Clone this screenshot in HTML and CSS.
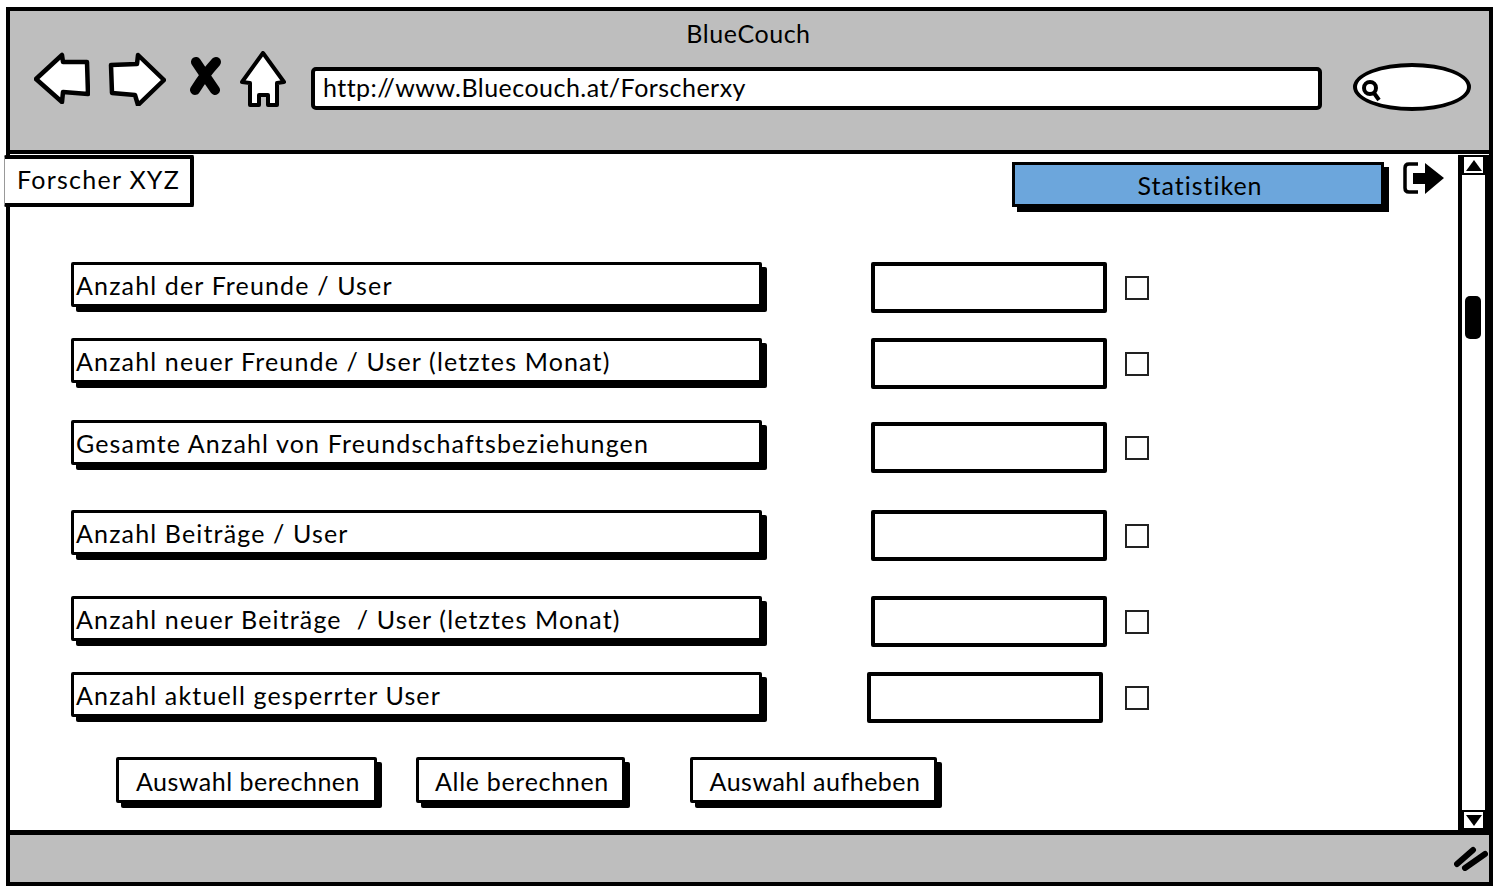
FILE: index.html
```html
<!DOCTYPE html>
<html lang="en">

<head>
    <meta charset="UTF-8">
    <meta name="viewport" content="width=device-width, initial-scale=1.0">
    <title>BlueCouch</title>
    <link rel="stylesheet" href="styles.css">
</head>

<body>
    <div class="window">
        <div class="head">
            <div class="head-tit">BlueCouch</div>
            <div class="tools">
                <svg class="ico-back" width="56" height="52" viewBox="0 0 56 52">
                    <path d="M2 27 L28 3 L29 10 L53 10 L54 42 L29 40 L28 50 Z" fill="#fff" stroke="#000" stroke-width="4.5" stroke-linejoin="round" />
                </svg>
                <svg class="ico-next" width="58" height="54" viewBox="0 0 58 54">
                    <path d="M3 13 L29 12 L30 3 L56 28 L30 53 L27 43 L4 41 Z" fill="#fff" stroke="#000" stroke-width="4.5" stroke-linejoin="round" />
                </svg>
                <svg class="ico-stop" width="34" height="40" viewBox="0 0 34 40">
                    <path d="M7 6 Q15 18 26 34 M27 6 Q16 18 6 34" fill="none" stroke="#000" stroke-width="10" stroke-linecap="round" />
                </svg>
                <svg class="ico-home" width="46" height="56" viewBox="0 0 46 56">
                    <path d="M23 2 L44 31 L37 32 L37 54 L28 54 L28 44 L19 44 L19 54 L10 54 L10 32 L2 31 Z" fill="#fff" stroke="#000" stroke-width="4" stroke-linejoin="round" />
                </svg>
                <div class="url">http://www.Bluecouch.at/Forscherxy</div>
                <div class="search">
                    <svg width="24" height="26" viewBox="0 0 24 26">
                        <circle cx="8" cy="11" r="6" fill="none" stroke="#000" stroke-width="4" />
                        <path d="M12 16 L17 23" stroke="#000" stroke-width="4" />
                    </svg>
                </div>
            </div>
        </div>

        <div class="main">
            <div class="tab">Forscher XYZ</div>
            <div class="content">
                <div class="topbar">
                    <a class="stat" href="#">Statistiken</a>
                    <svg class="ico-exit" width="42" height="34" viewBox="0 0 42 34">
                        <path d="M15 3 H6 Q2 3 2 7 V27 Q2 31 6 31 H15" fill="none" stroke="#000" stroke-width="3.5" />
                        <path d="M10 12 H22 V2 L41 17 L22 33 V23 H10 Z" fill="#000" />
                    </svg>
                </div>
                <div class="rows">
                    <div class="row">
                        <div class="label">Anzahl der Freunde / User</div>
                        <div class="field"></div>
                        <div class="check"></div>
                    </div>
                    <div class="row">
                        <div class="label">Anzahl neuer Freunde / User (letztes Monat)</div>
                        <div class="field"></div>
                        <div class="check"></div>
                    </div>
                    <div class="row">
                        <div class="label">Gesamte Anzahl von Freundschaftsbeziehungen</div>
                        <div class="field"></div>
                        <div class="check"></div>
                    </div>
                    <div class="row">
                        <div class="label">Anzahl Beiträge / User</div>
                        <div class="field"></div>
                        <div class="check"></div>
                    </div>
                    <div class="row">
                        <div class="label">Anzahl neuer Beiträge &nbsp;/ User (letztes Monat)</div>
                        <div class="field"></div>
                        <div class="check"></div>
                    </div>
                    <div class="row">
                        <div class="label">Anzahl aktuell gesperrter User</div>
                        <div class="field"></div>
                        <div class="check"></div>
                    </div>
                </div>
                <div class="btns">
                    <a class="btn btn-sel" href="#">Auswahl berechnen</a>
                    <a class="btn btn-all" href="#">Alle berechnen</a>
                    <a class="btn btn-off" href="#">Auswahl aufheben</a>
                </div>
            </div>
            <div class="scroll">
                <div class="scroll-btn"><span class="arrow-up"></span></div>
                <div class="thumb"></div>
                <div class="scroll-btn"><span class="arrow-down"></span></div>
            </div>
        </div>

        <div class="foot">
            <svg width="34" height="26" viewBox="0 0 34 26">
                <path d="M3 19 L19 5 M11 23 L31 9" stroke="#000" stroke-width="6" stroke-linecap="round" />
            </svg>
        </div>
    </div>
</body>

</html>
```

FILE: styles.css
```css
* {
    margin: 0;
    padding: 0;
    box-sizing: border-box;
}

body {
    background-color: white;
    font-family: "Lato", "Open Sans", sans-serif;
    font-size: 25px;
    letter-spacing: 1.15px;
    color: #000;
}

a {
    color: #000;
    text-decoration: none;
}

.window {
    width: 1487px;
    height: 879px;
    margin: 7px 0 0 6px;
    border: 4px solid #000;
    display: flex;
    flex-direction: column;
}

/* browser bar */
.head {
    height: 143px;
    background-color: #bebebe;
    border-bottom: 4px solid #000;
}

.head-tit {
    height: 34px;
    padding: 8px 2px 0 0;
    text-align: center;
    line-height: 28px;
    letter-spacing: 0.55px;
}

.tools {
    display: flex;
    align-items: flex-start;
    margin-top: 7px;
    padding-left: 24px;
}

.ico-next {
    margin-left: 18px;
}

.ico-stop {
    margin: 4px 0 0 23px;
}

.ico-home {
    margin: -1px 0 0 17px;
}

.url {
    width: 1011px;
    height: 43px;
    margin: 15px 0 0 25px;
    padding-left: 8px;
    line-height: 32px;
    letter-spacing: 0.47px;
    background-color: white;
    border: 4px solid #000;
    border-radius: 5px;
}

.search {
    width: 118px;
    height: 48px;
    margin: 11px 0 0 31px;
    padding: 10px 0 0 5px;
    background-color: white;
    border: 4px solid #000;
    border-radius: 50%;
}

.search svg {
    display: block;
}

/* page */
.main {
    flex: 1;
    display: flex;
    position: relative;
}

.tab {
    position: absolute;
    left: -6px;
    top: 1px;
    width: 190px;
    height: 52px;
    padding-left: 12px;
    line-height: 40px;
    letter-spacing: 1.25px;
    background-color: white;
    border: 4px solid #000;
    border-left: 1px solid #999;
    border-radius: 2px;
}

.content {
    flex: 1;
}

.topbar {
    display: flex;
    justify-content: flex-end;
    align-items: flex-start;
    height: 108px;
    padding: 8px 13px 0 0;
}

.stat {
    width: 372px;
    height: 45px;
    margin-right: 19px;
    padding-left: 4px;
    text-align: center;
    line-height: 40px;
    letter-spacing: 1px;
    background-color: #6ca6dc;
    border: 3px solid #000;
    box-shadow: 5px 5px 0 #000;
}

.ico-exit {
    margin-top: -1px;
}

.rows {
    padding-left: 61px;
}

.row {
    display: flex;
    align-items: flex-start;
    height: 50px;
}

.row:nth-child(2),
.row:nth-child(6) {
    margin-top: 26px;
}

.row:nth-child(3) {
    margin-top: 32px;
}

.row:nth-child(4) {
    margin-top: 40px;
}

.row:nth-child(5) {
    margin-top: 36px;
}

.label {
    width: 691px;
    height: 45px;
    padding-left: 2px;
    line-height: 41px;
    white-space: nowrap;
    background-color: white;
    border: 3px solid #000;
    border-radius: 2px;
    box-shadow: 5px 5px 0 #000;
}

.field {
    width: 236px;
    height: 51px;
    margin-left: 109px;
    background-color: white;
    border: 4px solid #000;
    border-radius: 2px;
}

.check {
    width: 24px;
    height: 24px;
    margin: 14px 0 0 18px;
    border: 2px solid #222;
}

.row:nth-child(3) .field {
    margin-top: 2px;
}

.row:nth-child(3) .check {
    margin-top: 16px;
}

.row:last-child .field {
    margin-left: 105px;
}

.row:last-child .check {
    margin-left: 22px;
}

.btns {
    display: flex;
    margin-top: 35px;
    padding-left: 106px;
}

.btn {
    height: 46px;
    padding-left: 3px;
    text-align: center;
    line-height: 43px;
    letter-spacing: 0.5px;
    background-color: white;
    border: 3px solid #000;
    border-radius: 2px;
    box-shadow: 5px 5px 0 #000;
}

.btn-sel {
    width: 261px;
}

.btn-all {
    width: 209px;
    margin-left: 39px;
    letter-spacing: 0.7px;
}

.btn-off {
    width: 247px;
    margin-left: 65px;
}

/* scrollbar */
.scroll {
    width: 31px;
    display: flex;
    flex-direction: column;
    justify-content: space-between;
    position: relative;
    margin-top: 1px;
    border-left: 4px solid #000;
    border-right: 4px solid #000;
}

.scroll-btn {
    height: 20px;
    display: flex;
    justify-content: center;
    align-items: center;
    border: 2px solid #000;
}

.arrow-up,
.arrow-down {
    width: 0;
    height: 0;
    border-left: 8px solid transparent;
    border-right: 8px solid transparent;
}

.arrow-up {
    border-bottom: 11px solid #000;
}

.arrow-down {
    border-top: 11px solid #000;
}

.thumb {
    position: absolute;
    left: 3px;
    top: 141px;
    width: 16px;
    height: 43px;
    background-color: #000;
    border-radius: 5px;
}

/* status bar */
.foot {
    height: 52px;
    display: flex;
    justify-content: flex-end;
    align-items: flex-start;
    padding: 10px 1px 0 0;
    background-color: #bebebe;
    border-top: 5px solid #000;
}
```
